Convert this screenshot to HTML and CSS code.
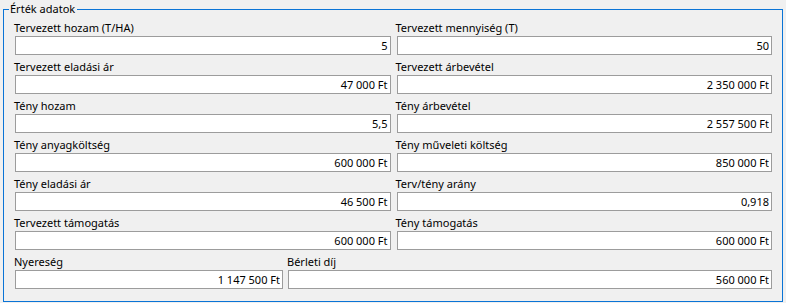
FILE: index.html
```html
<!DOCTYPE html>
<html lang="hu">
<head>
    <meta charset="UTF-8">
    <title>Érték adatok</title>
    <link rel="stylesheet" href="styles.css">
</head>
<body>
    <div class="group">
        <span class="group-title">Érték adatok</span>

        <div class="row">
            <div class="field">
                <label>Tervezett hozam (T/HA)</label>
                <input type="text" value="5" readonly>
            </div>
            <div class="field">
                <label>Tervezett mennyiség (T)</label>
                <input type="text" value="50" readonly>
            </div>
        </div>

        <div class="row">
            <div class="field">
                <label>Tervezett eladási ár</label>
                <input type="text" value="47 000 Ft" readonly>
            </div>
            <div class="field">
                <label>Tervezett árbevétel</label>
                <input type="text" value="2 350 000 Ft" readonly>
            </div>
        </div>

        <div class="row">
            <div class="field">
                <label>Tény hozam</label>
                <input type="text" value="5,5" readonly>
            </div>
            <div class="field">
                <label>Tény árbevétel</label>
                <input type="text" value="2 557 500 Ft" readonly>
            </div>
        </div>

        <div class="row">
            <div class="field">
                <label>Tény anyagköltség</label>
                <input type="text" value="600 000 Ft" readonly>
            </div>
            <div class="field">
                <label>Tény műveleti költség</label>
                <input type="text" value="850 000 Ft" readonly>
            </div>
        </div>

        <div class="row">
            <div class="field">
                <label>Tény eladási ár</label>
                <input type="text" value="46 500 Ft" readonly>
            </div>
            <div class="field">
                <label>Terv/tény arány</label>
                <input type="text" value="0,918" readonly>
            </div>
        </div>

        <div class="row">
            <div class="field">
                <label>Tervezett támogatás</label>
                <input type="text" value="600 000 Ft" readonly>
            </div>
            <div class="field">
                <label>Tény támogatás</label>
                <input type="text" value="600 000 Ft" readonly>
            </div>
        </div>

        <div class="row row-last">
            <div class="field">
                <label>Nyereség</label>
                <input type="text" value="1 147 500 Ft" readonly>
            </div>
            <div class="field">
                <label>Bérleti díj</label>
                <input type="text" value="560 000 Ft" readonly>
            </div>
        </div>
    </div>
</body>
</html>
```

FILE: styles.css
```css
body {
    margin: 0;
    padding-top: 9px;
    background: #f0f0f0;
    font-family: 'Noto Sans', 'Liberation Sans', sans-serif;
    font-size: 11px;
    color: #000;
}

.group {
    position: relative;
    margin: 0 3px;
    padding: 6px 10px 12px 11px;
    border: 1px solid #0a74d6;
}

/* title sits over the top border line */
.group-title {
    position: absolute;
    top: -9px;
    left: 5px;
    padding: 0 2px 0 1px;
    line-height: 16px;
    background: #f0f0f0;
}

.row {
    display: grid;
    grid-template-columns: 1fr 1fr;
    column-gap: 6px;
}

.row-last {
    grid-template-columns: 268px 1fr;
    column-gap: 5px;
}

.field {
    display: flex;
    flex-direction: column;
}

.field label {
    height: 20px;
    line-height: 16px;
    padding-top: 4px;
    box-sizing: border-box;
    margin-left: -1px;
}

.field input {
    box-sizing: border-box;
    width: 100%;
    height: 19px;
    margin: 0;
    padding: 0 2px;
    border: 1px solid #9c9c9c;
    background: #fff;
    font: inherit;
    text-align: right;
    color: #000;
    outline: none;
}
```
